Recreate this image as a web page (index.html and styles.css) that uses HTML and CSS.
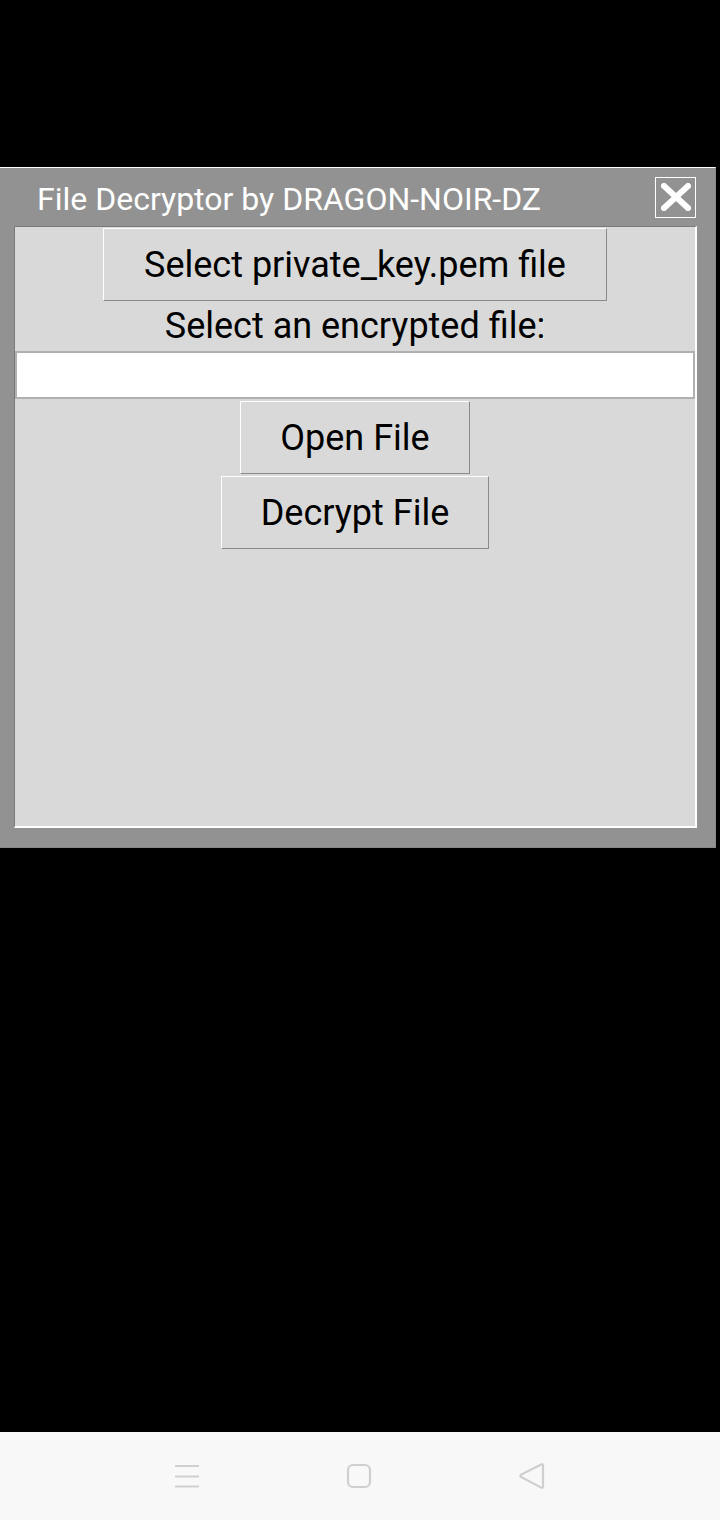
FILE: index.html
```html
<!DOCTYPE html>
<html>
<head>
<meta charset="utf-8">
<link rel="stylesheet" href="styles.css">
</head>
<body>
<div class="screen">
  <div class="top-space"></div>
  <div class="window">
    <div class="titlebar">
      <span class="title">File Decryptor by DRAGON-NOIR-DZ</span>
      <div class="close">
        <svg width="30" height="28" viewBox="0 0 30 28"><path d="M3 3 L27 25 M27 3 L3 25" stroke="#fff" stroke-width="6" stroke-linecap="square" fill="none"/></svg>
      </div>
    </div>
    <div class="panel">
      <div class="btn btn-key">Select private_key.pem file</div>
      <div class="label">Select an encrypted file:</div>
      <div class="entry"></div>
      <div class="btn btn-open">Open File</div>
      <div class="btn btn-decrypt">Decrypt File</div>
    </div>
  </div>
  <div class="spacer"></div>
  <div class="navbar">
    <svg class="nav-icon" width="26" height="24" viewBox="0 0 26 24"><path d="M1 2 H25 M1 12.5 H25 M1 22.5 H25" stroke="#cfcfcf" stroke-width="2" fill="none"/></svg>
    <svg class="nav-icon" width="26" height="26" viewBox="0 0 26 26"><rect x="2" y="2" width="22" height="22" rx="5" ry="5" stroke="#cfcfcf" stroke-width="2.2" fill="none"/></svg>
    <svg class="nav-icon" width="28" height="28" viewBox="0 0 28 28"><path d="M25 3.5 Q25 1.5 23.2 2.4 L3.2 12.6 Q1.5 13.8 3.2 15 L23.2 25.6 Q25 26.5 25 24.5 Z" stroke="#cfcfcf" stroke-width="2.2" fill="none" stroke-linejoin="round"/></svg>
  </div>
</div>
</body>
</html>
```
FILE: styles.css
```css
* { box-sizing: border-box; }
html, body {
  margin: 0;
  padding: 0;
  background: #000;
}
.screen {
  width: 720px;
  height: 1520px;
  display: flex;
  flex-direction: column;
  font-family: Roboto, "Noto Sans", sans-serif;
}
.top-space { height: 167px; flex: none; }
.window {
  flex: none;
  width: 716px;
  height: 681px;
  background: #929292;
  border-top: 1px solid #ffffff;
  border-right: 1px solid #878787;
  border-bottom: 1px solid #878787;
  display: flex;
  flex-direction: column;
}
.titlebar {
  height: 58px;
  flex: none;
  display: flex;
  align-items: center;
  padding-left: 37px;
  padding-right: 19px;
}
.title {
  flex: 1;
  color: #fff;
  font-size: 32px;
  line-height: 1;
  padding-top: 3px;
  white-space: nowrap;
}
.close {
  width: 41px;
  height: 41px;
  border: 1.5px solid #fff;
  display: flex;
  align-items: center;
  justify-content: center;
  margin-top: 0;
}
.panel {
  margin-left: 14px;
  width: 683px;
  height: 602px;
  background: #d9d9d9;
  border-top: 1px solid #7a7a7a;
  border-left: 1px solid #7a7a7a;
  border-right: 2px solid #ffffff;
  border-bottom: 2px solid #ffffff;
  display: flex;
  flex-direction: column;
  align-items: center;
}
.btn {
  height: 73px;
  padding: 0 39px;
  background: #d9d9d9;
  border-top: 1px solid #ffffff;
  border-left: 1px solid #ffffff;
  border-right: 1px solid #8a8a8a;
  border-bottom: 1px solid #8a8a8a;
  color: #000;
  font-size: 36px;
  display: flex;
  align-items: center;
  justify-content: center;
  white-space: nowrap;
}
.btn-key { margin-top: 1px; padding: 0 40px; }
.btn-open { margin-top: 2px; }
.btn-decrypt { margin-top: 2px; }
.label {
  height: 50px;
  font-size: 36px;
  color: #000;
  display: flex;
  align-items: center;
  justify-content: center;
}
.entry {
  align-self: flex-start;
  width: 680px;
  height: 48px;
  background: #fff;
  border: 2px solid #b0b0b0;
}
.spacer { flex: 1; }
.navbar {
  height: 88px;
  flex: none;
  background: #f8f8f8;
  display: flex;
  align-items: center;
  justify-content: center;
  gap: 146px;
  padding-top: 0;
}
```
